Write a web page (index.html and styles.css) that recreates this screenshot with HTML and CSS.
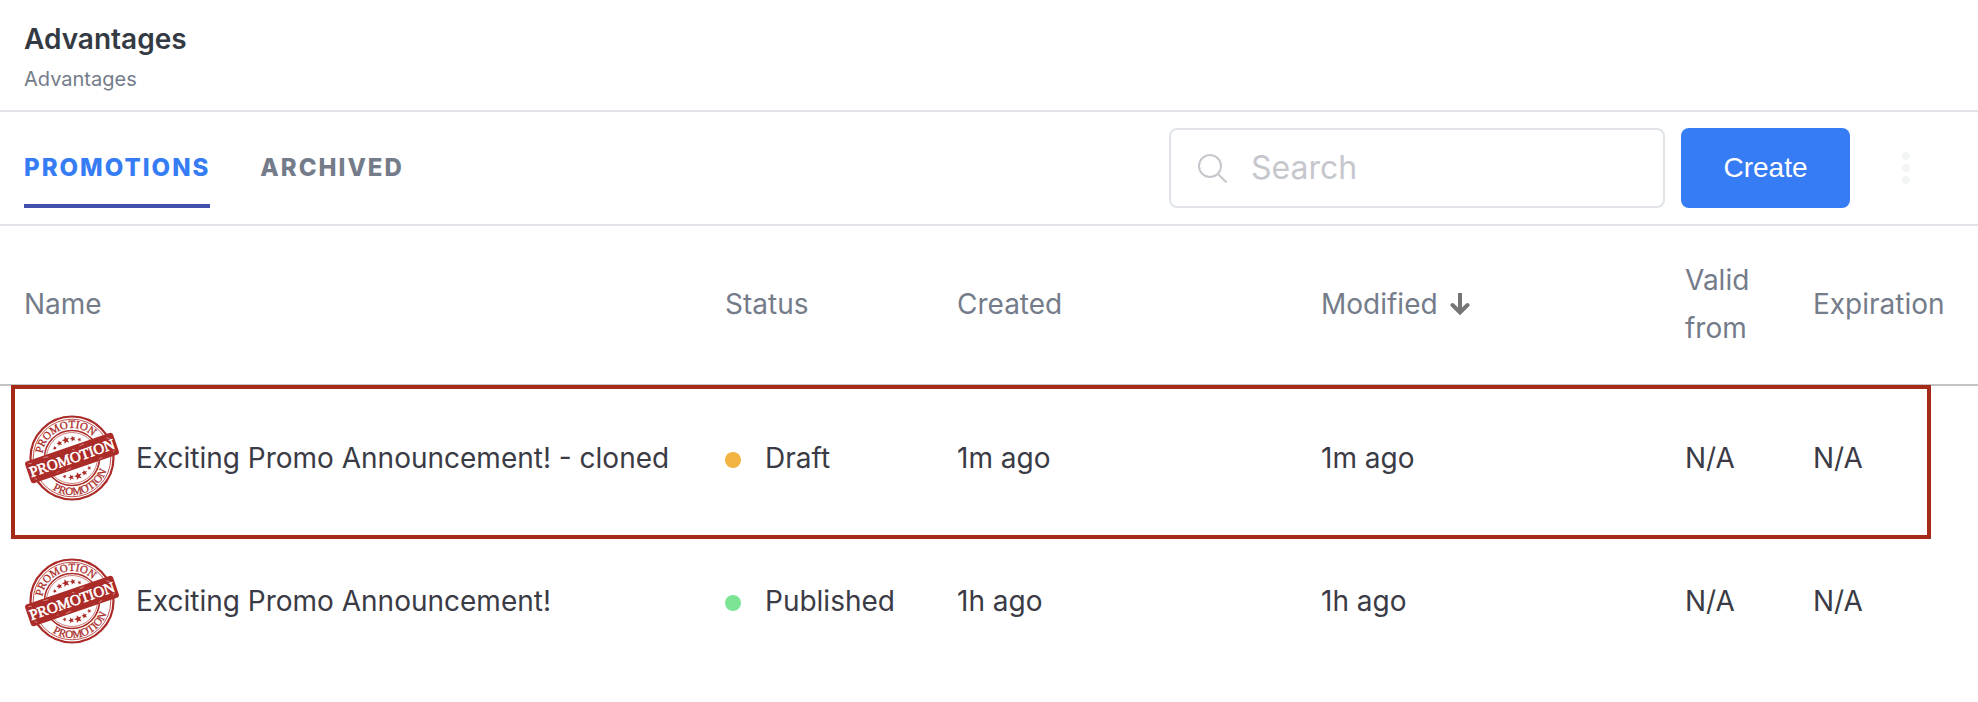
FILE: index.html
```html
<!DOCTYPE html>
<html lang="en">
<head>
<meta charset="utf-8">
<meta name="viewport" content="width=device-width, initial-scale=1">
<title>Advantages</title>
<link rel="stylesheet" href="styles.css">
</head>
<body>
<svg class="defs" aria-hidden="true">
  <defs>
    <path id="arc-top" d="M17 44 A30 30 0 0 1 77 44"/>
    <path id="arc-bottom" d="M10 44 A37 37 0 0 0 84 44"/>
    <polygon id="star" points="0,-3 0.900,-1 3,-0.900 1.300,0.500 1.900,2.600 0,1.400 -1.900,2.600 -1.300,0.500 -3,-0.900 -0.900,-1"/>
    <symbol id="stamp" viewBox="0 0 94 88">
      <g fill="none" stroke="#ab2b28">
        <circle cx="47" cy="44" r="41.500" stroke-width="2.200"/>
        <circle cx="47" cy="44" r="38.800" stroke-width="0.800"/>
        <circle cx="47" cy="44" r="27.500" stroke-width="1.600"/>
        <circle cx="47" cy="44" r="25.500" stroke-width="0.600"/>
      </g>
      <g transform="rotate(-19 47 44)">
        <text class="stamp-ring"><textPath href="#arc-top" startOffset="50%" text-anchor="middle">PROMOTION</textPath></text>
        <text class="stamp-ring"><textPath href="#arc-bottom" startOffset="50%" text-anchor="middle">PROMOTION</textPath></text>
        <g fill="#ab2b28">
          <use href="#star" transform="translate(47 25) scale(1.300)"/>
          <use href="#star" x="40" y="26"/>
          <use href="#star" x="54" y="26"/>
          <use href="#star" transform="translate(34 29) scale(0.700)"/>
          <use href="#star" transform="translate(60 29) scale(0.700)"/>
          <use href="#star" transform="translate(47 63) scale(1.300)"/>
          <use href="#star" x="40" y="62"/>
          <use href="#star" x="54" y="62"/>
          <use href="#star" transform="translate(34 59) scale(0.700)"/>
          <use href="#star" transform="translate(60 59) scale(0.700)"/>
        </g>
        <rect x="0.500" y="32.500" width="93" height="23" rx="3" fill="#ab2b28"/>
        <path d="M4 35l3 1M20 34.500l5 .5M37 54l6-1M58 35l5-.5M72 54l4-1M86 36l3 2M5 51l2 2M50 36l2 1M28 53l2-1M88 52l2-2" fill="none" stroke="#d58f8c" stroke-width="0.800"/>
        <text class="stamp-band" x="47" y="49" text-anchor="middle">PROMOTION</text>
      </g>
    </symbol>
  </defs>
</svg>

<header class="page-header">
  <h1 class="page-title">Advantages</h1>
  <p class="page-subtitle">Advantages</p>
</header>

<div class="toolbar">
  <nav class="tabs" aria-label="Advantage lists">
    <a class="tab tab-active" href="#promotions" aria-current="page">PROMOTIONS</a>
    <a class="tab" href="#archived">ARCHIVED</a>
  </nav>
  <div class="actions">
    <label class="search">
      <svg class="search-icon" viewBox="0 0 30 30" aria-hidden="true"><circle cx="13" cy="13" r="11"/><path d="M21 21l8.500 8.500"/></svg>
      <input class="search-input" type="search" placeholder="Search" aria-label="Search">
    </label>
    <button class="create" type="button">Create</button>
    <button class="more" type="button" aria-label="More options">
      <svg class="more-icon" viewBox="0 0 8 32" aria-hidden="true"><circle cx="4" cy="4" r="4"/><circle cx="4" cy="16" r="4"/><circle cx="4" cy="28" r="4"/></svg>
    </button>
  </div>
</div>

<main class="list">
  <table class="table">
    <colgroup>
      <col class="col-name"><col class="col-status"><col class="col-date"><col class="col-date"><col class="col-valid"><col class="col-expiration">
    </colgroup>
    <thead>
      <tr>
        <th scope="col">Name</th>
        <th scope="col">Status</th>
        <th scope="col">Created</th>
        <th scope="col" aria-sort="descending"><span class="sorted">Modified
          <svg class="sort-icon" viewBox="0 0 20 24" aria-hidden="true"><path d="M10 1v19"/><path d="M2.500 13l7.500 7.500 7.500-7.500" stroke-linecap="round"/></svg></span></th>
        <th scope="col">Valid from</th>
        <th scope="col">Expiration</th>
      </tr>
    </thead>
    <tbody>
      <tr>
        <td><div class="name"><svg class="stamp" role="img" aria-label="Promotion stamp"><use href="#stamp"/></svg>Exciting Promo Announcement! - cloned</div></td>
        <td><span class="status"><span class="dot dot-draft"></span>Draft</span></td>
        <td>1m ago</td>
        <td>1m ago</td>
        <td>N/A</td>
        <td>N/A</td>
      </tr>
      <tr>
        <td><div class="name"><svg class="stamp" role="img" aria-label="Promotion stamp"><use href="#stamp"/></svg>Exciting Promo Announcement!</div></td>
        <td><span class="status"><span class="dot dot-published"></span>Published</span></td>
        <td>1h ago</td>
        <td>1h ago</td>
        <td>N/A</td>
        <td>N/A</td>
      </tr>
    </tbody>
  </table>
  <div class="highlight" aria-hidden="true"></div>
</main>
</body>
</html>
```

FILE: styles.css
```css
* {
  box-sizing: border-box;
}

body {
  margin: 0;
  background: #fff;
  color: #3a3b45;
  font-family: Inter, "Liberation Sans", sans-serif;
  font-size: 28px;
  line-height: 48px;
}

.defs {
  position: absolute;
  width: 0;
  height: 0;
}

.page-header {
  padding: 18px 24px 12px;
  border-bottom: 2px solid #e0e4e9;
}

.page-title {
  margin: 0;
  color: #343a43;
  font-size: 28px;
  font-weight: 600;
  line-height: 42px;
}

.page-subtitle {
  margin: 0;
  color: #747c8a;
  font-size: 20px;
  line-height: 38px;
}

.toolbar {
  display: flex;
  align-items: center;
  justify-content: space-between;
  padding: 16px 32px 16px 24px;
  border-bottom: 2px solid #e0e4e9;
}

.tabs {
  display: flex;
  gap: 50px;
}

.tab {
  height: 80px;
  border-bottom: 4px solid transparent;
  color: #747c8a;
  font-size: 24px;
  font-weight: 800;
  line-height: 80px;
  letter-spacing: 2px;
  text-decoration: none;
}

.tab-active {
  border-bottom-color: #4350af;
  color: #367cf4;
}

.actions {
  display: flex;
  gap: 16px;
}

.search {
  display: flex;
  align-items: center;
  gap: 24px;
  width: 496px;
  height: 80px;
  padding: 0 26px;
  border: 2px solid #e0e4e9;
  border-radius: 8px;
}

.search-icon {
  flex: none;
  width: 30px;
  height: 30px;
  fill: none;
  stroke: #c6c7cd;
  stroke-width: 2;
}

.search-input {
  flex: 1;
  min-width: 0;
  padding: 0;
  border: 0;
  outline: 0;
  background: none;
  color: inherit;
  font: inherit;
  font-size: 32px;
}

.search-input::placeholder {
  color: #c6c7cd;
  opacity: 1;
}

.create {
  width: 169px;
  height: 80px;
  border: 0;
  border-radius: 8px;
  background: #367cf4;
  color: #fff;
  font: 28px "Liberation Sans", sans-serif;
}

.more {
  width: 80px;
  padding: 0;
  border: 0;
  background: none;
}

.more-icon {
  display: block;
  width: 8px;
  height: 32px;
  margin: 0 auto;
  fill: #f3f4f6;
}

.list {
  position: relative;
}

.table {
  width: 100%;
  border-collapse: separate;
  border-spacing: 0;
  table-layout: fixed;
}

.col-name {
  width: 725px;
}

.col-status {
  width: 232px;
}

.col-date {
  width: 364px;
}

.col-valid {
  width: 128px;
}

.table th,
.table td {
  padding: 0;
  text-align: left;
  font-weight: 400;
}

.table th:first-child,
.table td:first-child {
  padding-left: 24px;
}

.table th {
  height: 160px;
  padding-right: 24px;
  padding-bottom: 2px;
  border-bottom: 2px solid #c4c4c4;
  color: #747c8a;
}

.table td {
  height: 143px;
}

.sorted {
  display: flex;
  align-items: center;
  gap: 12px;
}

.sort-icon {
  width: 20px;
  height: 24px;
  fill: none;
  stroke: #757575;
  stroke-width: 4;
}

.name {
  display: flex;
  align-items: center;
  gap: 16px;
}

.stamp {
  flex: none;
  width: 96px;
  height: 88px;
}

.stamp-ring {
  fill: #ab2b28;
  stroke: #ab2b28;
  stroke-width: 0.3px;
  font: 400 11px "Liberation Serif", serif;
}

.stamp-band {
  fill: #fff;
  stroke: #fff;
  stroke-width: 0.6px;
  font: 400 15px "Liberation Serif", serif;
}

.status {
  display: flex;
  align-items: center;
  gap: 24px;
}

.dot {
  width: 16px;
  height: 16px;
  margin-top: 4px;
  border-radius: 50%;
}

.dot-draft {
  background: #f3b340;
}

.dot-published {
  background: #7be495;
}

.highlight {
  position: absolute;
  top: 159px;
  right: 47px;
  left: 11px;
  height: 154px;
  border: 4px solid #a52a17;
  pointer-events: none;
}
```
